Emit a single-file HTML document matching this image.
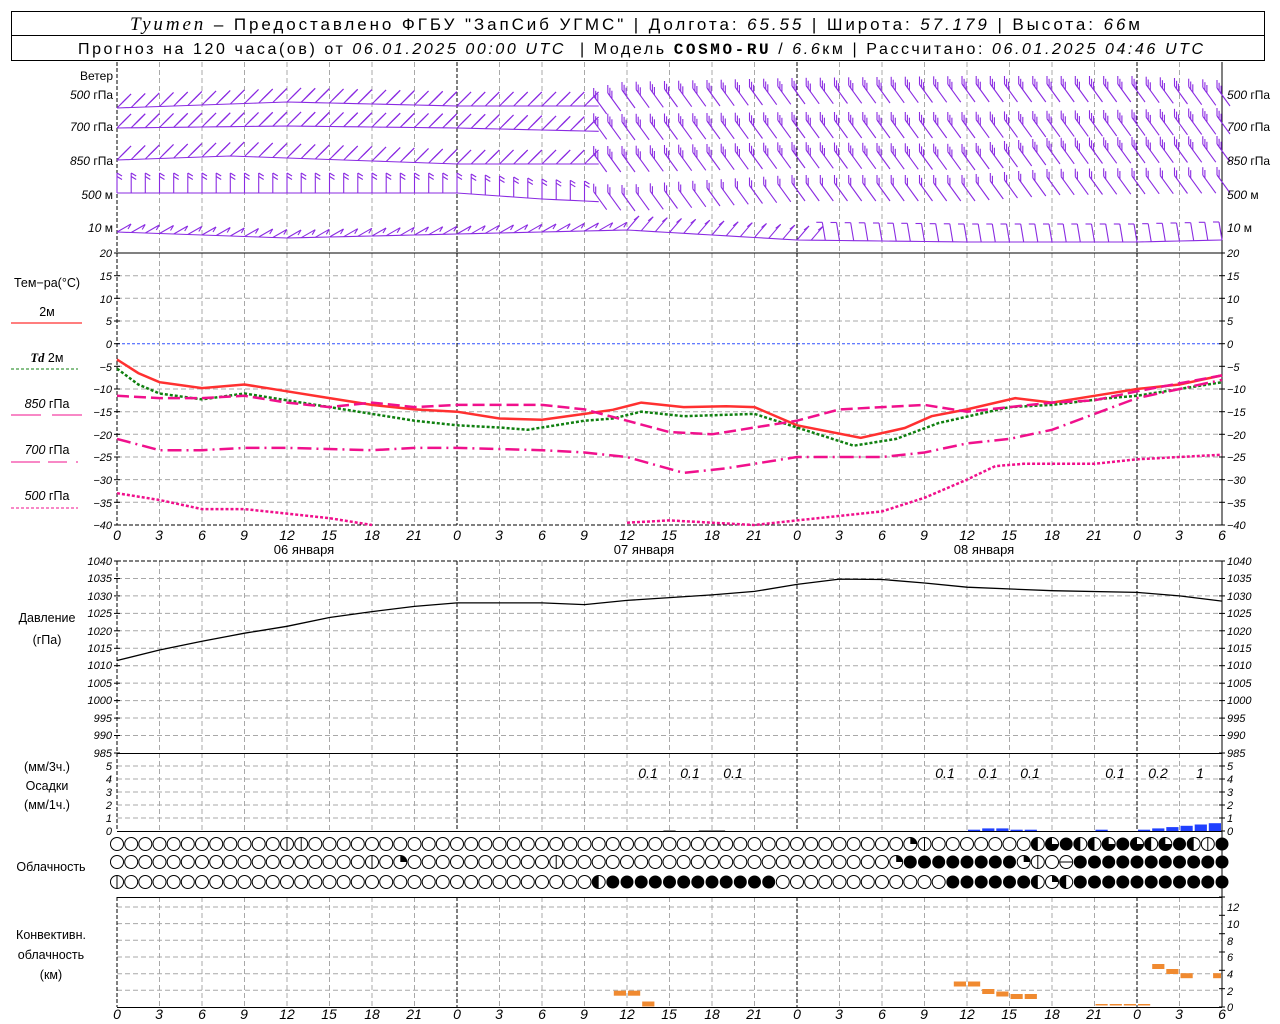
<!DOCTYPE html>
<html><head><meta charset="utf-8"><style>
html,body{margin:0;padding:0;background:#fff;width:1280px;height:1024px;overflow:hidden}
svg{position:absolute;left:0;top:0}
text{font-family:"Liberation Sans","DejaVu Sans",sans-serif;fill:#000}
.it{font-style:italic}
.tl{font-size:11px;font-style:italic}
.hx{font-size:14px;font-style:italic}
.lb{font-size:12px}
</style></head><body>
<svg id="g" width="1280" height="1024" xmlns="http://www.w3.org/2000/svg"></svg>
<svg width="1280" height="1024" xmlns="http://www.w3.org/2000/svg">
<rect x="11.5" y="11.5" width="1253" height="49" fill="none" stroke="#000"/>
<line x1="11" y1="35.5" x2="1265" y2="35.5" stroke="#000"/>
<text x="130" y="30" font-size="17" textLength="1010" lengthAdjust="spacing" xml:space="preserve"><tspan font-family="Liberation Serif" font-style="italic" font-size="19">Tyumen</tspan> – Предоставлено ФГБУ "ЗапСиб УГМС" | Долгота: <tspan font-style="italic">65.55</tspan> | Широта: <tspan font-style="italic">57.179</tspan> | Высота: <tspan font-style="italic">66</tspan>м</text>
<text x="78" y="54" font-size="16" textLength="1125" lengthAdjust="spacing" xml:space="preserve">Прогноз на 120 часа(ов) от <tspan font-style="italic">06.01.2025 00:00 UTC</tspan>  | Модель <tspan font-family="Liberation Mono" font-weight="bold">COSMO-RU</tspan> / <tspan font-style="italic">6.6</tspan>км | Рассчитано: <tspan font-style="italic">06.01.2025 04:46 UTC</tspan></text>
<g class="lb" text-anchor="end">
<text x="113" y="80">Ветер</text>
<text x="113" y="99"><tspan class="it">500</tspan> гПа</text>
<text x="113" y="131"><tspan class="it">700</tspan> гПа</text>
<text x="113" y="165"><tspan class="it">850</tspan> гПа</text>
<text x="113" y="199"><tspan class="it">500</tspan> м</text>
<text x="113" y="232"><tspan class="it">10</tspan>   м</text>
</g>
<g class="lb">
<text x="1227" y="99"><tspan class="it">500</tspan> гПа</text>
<text x="1227" y="131"><tspan class="it">700</tspan> гПа</text>
<text x="1227" y="165"><tspan class="it">850</tspan> гПа</text>
<text x="1227" y="199"><tspan class="it">500</tspan> м</text>
<text x="1227" y="232"><tspan class="it">10</tspan>   м</text>
</g>
<g font-size="12.5" text-anchor="middle">
<text x="47" y="287">Тем−ра(°С)</text>
<text x="47" y="316">2м</text>
<text x="47" y="362"><tspan font-family="Liberation Serif" font-style="italic" font-weight="bold">Td</tspan>  2м</text>
<text x="47" y="408"><tspan class="it">850</tspan> гПа</text>
<text x="47" y="454"><tspan class="it">700</tspan> гПа</text>
<text x="47" y="500"><tspan class="it">500</tspan> гПа</text>
<text x="47" y="622">Давление</text>
<text x="47" y="644">(гПа)</text>
<text x="47" y="771">(мм/3ч.)</text>
<text x="47" y="790">Осадки</text>
<text x="47" y="809">(мм/1ч.)</text>
<text x="51" y="871">Облачность</text>
<text x="51" y="939">Конвективн.</text>
<text x="51" y="959">облачность</text>
<text x="51" y="979">(км)</text>
</g>
<line x1="11" y1="323" x2="82" y2="323" stroke="#ff3030" stroke-width="1.2"/>
<line x1="11" y1="369" x2="78" y2="369" stroke="#108010" stroke-dasharray="3,2"/>
<line x1="11" y1="415" x2="41" y2="415" stroke="#f0108c"/><line x1="52" y1="415" x2="82" y2="415" stroke="#f0108c"/>
<path d="M11 462h28M38 462h2M48 462h19M76 462h2" stroke="#f0108c"/>
<line x1="11" y1="508" x2="78" y2="508" stroke="#f0108c" stroke-dasharray="3,2"/>
<g class="tl" text-anchor="end">
<text x="112" y="257">20</text><text x="112" y="280">15</text><text x="112" y="303">10</text><text x="112" y="325">5</text><text x="112" y="348">0</text><text x="112" y="371">−5</text><text x="112" y="393">−10</text><text x="112" y="416">−15</text><text x="112" y="439">−20</text><text x="112" y="461">−25</text><text x="112" y="484">−30</text><text x="112" y="507">−35</text><text x="112" y="529">−40</text>
<text x="112" y="565">1040</text><text x="112" y="582">1035</text><text x="112" y="600">1030</text><text x="112" y="617">1025</text><text x="112" y="635">1020</text><text x="112" y="652">1015</text><text x="112" y="669">1010</text><text x="112" y="687">1005</text><text x="112" y="704">1000</text><text x="112" y="722">995</text><text x="112" y="739">990</text><text x="112" y="757">985</text>
</g>
<g class="tl">
<text x="1227" y="257">20</text><text x="1227" y="280">15</text><text x="1227" y="303">10</text><text x="1227" y="325">5</text><text x="1227" y="348">0</text><text x="1227" y="371">−5</text><text x="1227" y="393">−10</text><text x="1227" y="416">−15</text><text x="1227" y="439">−20</text><text x="1227" y="461">−25</text><text x="1227" y="484">−30</text><text x="1227" y="507">−35</text><text x="1227" y="529">−40</text>
<text x="1227" y="565">1040</text><text x="1227" y="582">1035</text><text x="1227" y="600">1030</text><text x="1227" y="617">1025</text><text x="1227" y="635">1020</text><text x="1227" y="652">1015</text><text x="1227" y="669">1010</text><text x="1227" y="687">1005</text><text x="1227" y="704">1000</text><text x="1227" y="722">995</text><text x="1227" y="739">990</text><text x="1227" y="757">985</text>
<text x="1227" y="770">5</text><text x="1227" y="783">4</text><text x="1227" y="796">3</text><text x="1227" y="809">2</text><text x="1227" y="822">1</text><text x="1227" y="835">0</text>
<text x="1227" y="911">12</text><text x="1227" y="928">10</text><text x="1227" y="945">8</text><text x="1227" y="961">6</text><text x="1227" y="978">4</text><text x="1227" y="995">2</text><text x="1227" y="1011">0</text>
</g>
<g class="tl" text-anchor="end">
<text x="112" y="770">5</text><text x="112" y="783">4</text><text x="112" y="796">3</text><text x="112" y="809">2</text><text x="112" y="822">1</text><text x="112" y="835">0</text>
</g>
<g class="hx" text-anchor="middle">
<text x="117" y="540">0</text><text x="159" y="540">3</text><text x="202" y="540">6</text><text x="244" y="540">9</text><text x="287" y="540">12</text><text x="329" y="540">15</text><text x="372" y="540">18</text><text x="414" y="540">21</text><text x="457" y="540">0</text><text x="499" y="540">3</text><text x="542" y="540">6</text><text x="584" y="540">9</text><text x="627" y="540">12</text><text x="669" y="540">15</text><text x="712" y="540">18</text><text x="754" y="540">21</text><text x="797" y="540">0</text><text x="839" y="540">3</text><text x="882" y="540">6</text><text x="924" y="540">9</text><text x="967" y="540">12</text><text x="1009" y="540">15</text><text x="1052" y="540">18</text><text x="1094" y="540">21</text><text x="1137" y="540">0</text><text x="1179" y="540">3</text><text x="1222" y="540">6</text>
<text x="117" y="1019">0</text><text x="159" y="1019">3</text><text x="202" y="1019">6</text><text x="244" y="1019">9</text><text x="287" y="1019">12</text><text x="329" y="1019">15</text><text x="372" y="1019">18</text><text x="414" y="1019">21</text><text x="457" y="1019">0</text><text x="499" y="1019">3</text><text x="542" y="1019">6</text><text x="584" y="1019">9</text><text x="627" y="1019">12</text><text x="669" y="1019">15</text><text x="712" y="1019">18</text><text x="754" y="1019">21</text><text x="797" y="1019">0</text><text x="839" y="1019">3</text><text x="882" y="1019">6</text><text x="924" y="1019">9</text><text x="967" y="1019">12</text><text x="1009" y="1019">15</text><text x="1052" y="1019">18</text><text x="1094" y="1019">21</text><text x="1137" y="1019">0</text><text x="1179" y="1019">3</text><text x="1222" y="1019">6</text>
</g>
<g font-size="13" text-anchor="middle">
<text x="304" y="554">06  января</text><text x="644" y="554">07  января</text><text x="984" y="554">08  января</text>
</g>
<g class="hx" text-anchor="middle">
<text x="648" y="778">0.1</text><text x="690" y="778">0.1</text><text x="733" y="778">0.1</text>
<text x="945" y="778">0.1</text><text x="988" y="778">0.1</text><text x="1030" y="778">0.1</text>
<text x="1115" y="778">0.1</text><text x="1158" y="778">0.2</text><text x="1200" y="778">1</text>
</g>
</svg>
<script>
var S=document.getElementById('g'),o='';
function X(h){return 117+h*14.1667}
function f(v){return (+v).toFixed(1)}
function L(x1,y1,x2,y2,st){o+='<line x1="'+f(x1)+'" y1="'+f(y1)+'" x2="'+f(x2)+'" y2="'+f(y2)+'" '+st+'/>';}
var gd='stroke="#a8a8a8" stroke-dasharray="5,3"';
for(var t=15;t>=-35;t-=5){var y=253+(20-t)*4.533;L(117,y,1222,y,t==0?'stroke="#3050ff" stroke-dasharray="3,2"':gd);}
for(var p=1035;p>=990;p-=5){var y=561+(1040-p)*3.49;L(117,y,1222,y,gd);}
for(var k=1;k<=5;k++){var y=831-k*13;L(117,y,1222,y,gd);}
for(var k=1;k<=6;k++){var y=1007-k*16.67;L(117,y,1222,y,gd);}
var panels=[[62,253],[253,525],[561,753],[753,831],[897,1007]];
for(var h=0;h<=78;h+=3){var x=X(h),day=(h%24==0);
 panels.forEach(function(p){L(x,p[0],x,p[1],day?'stroke="#000" stroke-dasharray="4,2"':gd);});}
function ticks(y0,y1,n,x){for(var i=0;i<=n;i++){var y=y0+(y1-y0)*i/n;L(x-3,y,x+3,y,'stroke="#000"');}}
ticks(253,525,12,117);ticks(253,525,12,1222);ticks(561,753,11,117);ticks(561,753,11,1222);ticks(753,831,6,1222);ticks(897,1007,6,1222);
L(117,253,1222,253,'stroke="#000"');L(117,525,1222,525,'stroke="#000" stroke-dasharray="4,2"');
L(117,561,1222,561,'stroke="#000" stroke-dasharray="4,2"');L(117,753.5,1222,753.5,'stroke="#000"');
L(117,831.5,1222,831.5,'stroke="#000"');L(117,897.5,1222,897.5,'stroke="#000"');L(117,1007.5,1222,1007.5,'stroke="#000"');
L(1222,62,1222,253,'stroke="#000"');L(1222,253,1222,525,'stroke="#000"');L(1222,561,1222,1007,'stroke="#000"');
function path(pts,fy,st){var s='M';pts.forEach(function(p,i){s+=(i?' L':'')+f(X(p[0]))+' '+f(fy(p[1]));});o+='<path d="'+s+'" fill="none" '+st+'/>';}
function ty(t){return 253+(20-t)*4.533}
path([[0,-3.5],[1.5,-6.5],[3,-8.5],[6,-9.8],[9,-9],[12,-10.5],[15,-12],[18,-13.5],[21,-14.5],[24,-15],[27,-16.5],[30,-16.8],[33,-15.5],[35,-14.6],[37,-13],[40,-14],[43,-13.8],[45,-14],[48,-18],[52.5,-20.8],[55.6,-18.6],[57.5,-16],[60,-14.5],[63.4,-12],[66,-13],[69,-11.5],[72,-10],[75,-9],[78,-7]],ty,'stroke="#ff3030" stroke-width="2.5"');
path([[0,-5.5],[1.5,-9],[3,-11],[6,-12.3],[9,-11],[12,-12.5],[15,-14],[18,-15.5],[21,-17],[24,-18],[27,-18.5],[29,-19],[33,-17],[35,-16.5],[37,-15],[40,-16],[45,-15.5],[48,-18.5],[52,-22.5],[55,-21],[58,-17.5],[63,-14],[66,-13.5],[70,-12],[72,-11.5],[78,-8.5]],ty,'stroke="#108010" stroke-width="2.5" stroke-dasharray="3,2"');
path([[0,-11.5],[3,-12],[6,-12],[9,-11.5],[12,-13],[15,-14],[18,-13],[21,-14],[24,-13.5],[30,-13.5],[33,-14.5],[36,-17],[39,-19.5],[42,-20],[48,-17],[51,-14.5],[57,-13.5],[60,-15],[63,-14],[66,-13],[69,-12.5],[72,-10.5],[78,-7]],ty,'stroke="#f0108c" stroke-width="2.5" stroke-dasharray="12,5"');
path([[0,-21],[3,-23.5],[6,-23.5],[9,-23],[12,-23],[18,-23.5],[21,-23],[24,-23],[30,-23.5],[33,-24],[36,-25],[40,-28.5],[43,-27.5],[48,-25],[54,-25],[57,-24],[60,-22],[63,-21],[66,-19],[69,-15.5],[72,-12],[78,-8]],ty,'stroke="#f0108c" stroke-width="2.5" stroke-dasharray="14,5,2,5"');
path([[0,-33],[3,-34.5],[6,-36.5],[9,-36.5],[12,-37.5],[15,-38.5],[18,-40]],ty,'stroke="#f0108c" stroke-width="2.5" stroke-dasharray="3,2"');
path([[36,-39.5],[39,-39],[42,-39.5],[45,-40],[48,-39],[51,-38],[54,-37],[57,-34],[60,-30],[62,-27],[64,-26.5],[69,-26.5],[72,-25.5],[75,-25],[78,-24.5]],ty,'stroke="#f0108c" stroke-width="2.5" stroke-dasharray="3,2"');
function py(p){return 561+(1040-p)*3.49}
path([[0,1011.5],[3,1014.5],[6,1017],[9,1019.3],[12,1021.3],[15,1023.8],[18,1025.5],[21,1027],[24,1028],[30,1028],[33,1027.5],[36,1028.7],[42,1030.3],[45,1031.3],[48,1033.3],[51,1034.8],[54,1034.7],[57,1033.7],[60,1032.5],[66,1031.5],[72,1031],[75,1030],[78,1028.5]],py,'stroke="#000" stroke-width="1.3"');
var rows=[[108,[[0,0],[12,-6],[24,-2],[34,-2],[36,-8],[48,-12],[60,-14],[72,-14],[78,-10]]],[130,[[0,-2],[12,-4],[24,-2],[36,2],[48,0],[60,0],[70,-2],[78,-4]]],[160,[[0,0],[8,-4],[24,4],[36,4],[48,0],[60,2],[66,-4],[78,-6]]],[193,[[0,0],[24,0],[30,6],[36,10],[48,0],[60,0],[66,-6],[78,-8]]],[234,[[0,-2],[12,4],[24,0],[36,-4],[48,6],[60,8],[72,8],[78,6]]]];
function interp(a,h){for(var i=1;i<a.length;i++)if(h<=a[i][0]){var q=(h-a[i-1][0])/(a[i][0]-a[i-1][0]);return a[i-1][1]+q*(a[i][1]-a[i-1][1]);}return a[a.length-1][1];}
var st='stroke="#8a2be2" stroke-width="1.1"';
rows.forEach(function(r,ri){
 var pts=[];
 for(var h=0;h<=78;h++){
  var x=X(h),y=r[0]+interp(r[1],h);if(h<=34||ri==4)pts.push([x,y]);
  var sx,sy,fx,fy,nf;
  if(ri==4){ if(h<36){sx=14;sy=-8;fx=-3;fy=5;} else if(h<50){sx=12;sy=-14;fx=-5;fy=4;} else {sx=-3;sy=-18;fx=-6;fy=0;} nf=1;}
  else if(ri==3&&h<34){sx=0;sy=-20;fx=5;fy=3;nf=2;}
  else if(h<34){sx=14;sy=-14;fx=-6;fy=6;nf=3;}
  else {sx=-13;sy=-18;fx=0;fy=-8;nf=ri<3?3:2;x+=8;y+=8;}
  var ex=x+sx,ey=y+sy;
  L(x,y,ex,ey,st);
  var ln=Math.sqrt(sx*sx+sy*sy);
  for(var k=0;k<nf;k++){var bx=ex-k*3.5*sx/ln,by=ey-k*3.5*sy/ln;L(bx,by,bx+fx,by+fy,st);}
 }
 var s='M';pts.forEach(function(p,i){s+=(i?' L':'')+f(p[0])+' '+f(p[1]);});o+='<path d="'+s+'" fill="none" '+st+'/>';
});
function bar(h0,h1,v,c,y0,sc){var x0=X(h0),x1=X(h1);o+='<rect x="'+f(x0+1)+'" y="'+f(y0-v*sc)+'" width="'+f(x1-x0-2)+'" height="'+f(v*sc)+'" fill="'+c+'"/>';}
[[60,61,0.1],[61,62,0.2],[62,63,0.2],[63,64,0.1],[64,65,0.1],[69,70,0.1],[72,73,0.1],[73,74,0.2],[74,75,0.3],[75,76,0.4],[76,77,0.5],[77,78,0.6]].forEach(function(b){bar(b[0],b[1],b[2],'#2040ff',831,13);});
[[38.5,39.5,0.05],[41,43,0.05]].forEach(function(b){bar(b[0],b[1],b[2],'#444',831,13);});
[[35,36,1.6],[36,37,1.6],[37,38,0.3],[59,60,2.7],[60,61,2.7],[61,62,1.8],[62,63,1.5],[63,64,1.2],[64,65,1.2],[73,74,4.8],[74,75,4.2],[75,76,3.7],[77.3,78,3.7]].forEach(function(b){var x0=X(b[0]),x1=X(b[1]);var y=1007-b[2]*8.33;o+='<rect x="'+f(x0+1)+'" y="'+f(y-3)+'" width="'+f(x1-x0-2)+'" height="5" fill="#f08a30"/>';});
[[69,70],[70,71],[71,72],[72,73]].forEach(function(b){var x0=X(b[0]),x1=X(b[1]);o+='<rect x="'+f(x0+1)+'" y="1004" width="'+f(x1-x0-2)+'" height="1.5" fill="#f08a30"/>';});
function cloud(x,y,t){var r=6.5;x=+x;y=+y;
 if(t==2){o+='<circle cx="'+f(x)+'" cy="'+y+'" r="'+r+'" fill="#000"/>';return;}
 o+='<circle cx="'+f(x)+'" cy="'+y+'" r="'+r+'" fill="#fff" stroke="#000" stroke-width="1"/>';
 if(t==1){o+='<path d="M'+f(x)+' '+f(y-r)+' A'+r+' '+r+' 0 0 0 '+f(x)+' '+f(y+r)+' Z" fill="#000"/>';}
 if(t==3){L(x,y-r,x,y+r,'stroke="#000"');}
 if(t==6){L(x-r,y,x+r,y,'stroke="#000"');}
 if(t==4){o+='<path d="M'+f(x)+' '+f(y)+' L'+f(x)+' '+f(y-r)+' A'+r+' '+r+' 0 1 0 '+f(x+r)+' '+f(y)+' Z" fill="#000"/>';}
 if(t==5){o+='<path d="M'+f(x)+' '+f(y)+' L'+f(x)+' '+f(y-r)+' A'+r+' '+r+' 0 0 1 '+f(x+r)+' '+f(y)+' Z" fill="#000"/>';}
}
var c1={12:3,13:3,56:5,57:3,65:1,66:4,67:2,68:1,69:1,70:4,71:2,72:4,73:1,74:4,75:2,76:1,77:3,78:2};
var c2={18:3,20:5,31:3,55:5,64:5,65:3,66:0,67:6};
var c3={0:3,34:1,65:1,66:5,67:1};
for(var h=0;h<=78;h++){var x=X(h);
 cloud(x,844,c1[h]!==undefined?c1[h]:0);
 cloud(x,862,c2[h]!==undefined?c2[h]:(h>=56?2:0));
 var t3=((h>=35&&h<=46)||h>=59)?2:0;if(c3[h]!==undefined)t3=c3[h];
 cloud(x,882,t3);
}
S.innerHTML=o;
</script>
</body></html>
